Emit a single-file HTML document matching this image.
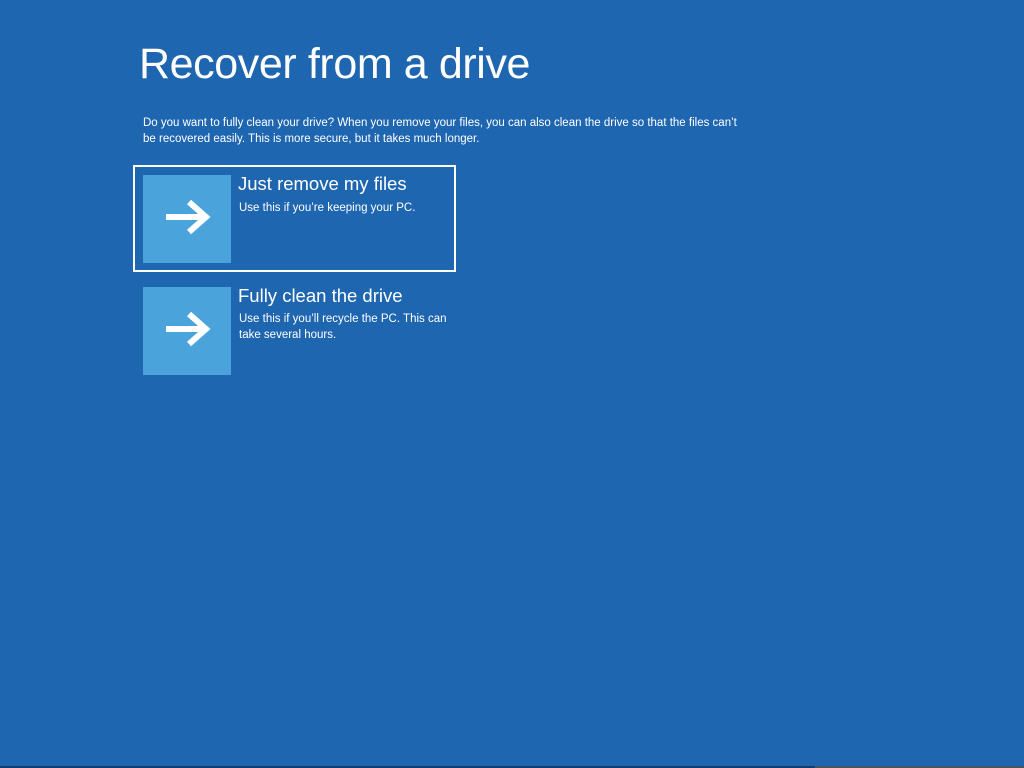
<!DOCTYPE html>
<html><head><style>
body{margin:0;width:1024px;height:768px;background:#1f66b1;overflow:hidden;position:relative;font-family:"Liberation Sans",sans-serif;color:#fff}
.t{position:absolute;left:139px;top:40px;font-size:43px;font-weight:normal;letter-spacing:-0.4px;white-space:nowrap}
.p{position:absolute;left:143px;top:115px;font-size:11.5px;line-height:16px;width:605px}
.sel{position:absolute;left:133px;top:165px;width:319px;height:103px;border:2px solid #fff}
.tile{position:absolute;left:143px;width:88px;height:88px;background:#4ba3dc}
.tile svg{position:absolute;left:0;top:0}
.h{position:absolute;left:238px;font-size:18.5px;white-space:nowrap}
.s{position:absolute;left:239px;font-size:11.5px;line-height:16px;width:220px}
.bot{position:absolute;left:0;top:766px;width:815px;height:2px;background:#133e6e}
.bot2{position:absolute;left:815px;top:766px;width:209px;height:2px;background:#4a5560}
</style></head><body>
<div class="t">Recover from a drive</div>
<div class="p">Do you want to fully clean your drive? When you remove your files, you can also clean the drive so that the files can’t be recovered easily. This is more secure, but it takes much longer.</div>
<div class="sel"></div>
<div class="tile" style="top:175px"><svg width="88" height="88"><path d="M23 42H60" stroke="#fff" stroke-width="6"/><path d="M46 27L63 42L46 57" stroke="#fff" stroke-width="6" fill="none"/></svg></div>
<div class="h" style="top:173px">Just remove my files</div>
<div class="s" style="top:200px">Use this if you’re keeping your PC.</div>
<div class="tile" style="top:287px"><svg width="88" height="88"><path d="M23 42H60" stroke="#fff" stroke-width="6"/><path d="M46 27L63 42L46 57" stroke="#fff" stroke-width="6" fill="none"/></svg></div>
<div class="h" style="top:285px">Fully clean the drive</div>
<div class="s" style="top:311px">Use this if you’ll recycle the PC. This can take several hours.</div>
<div class="bot"></div><div class="bot2"></div>
</body></html>
